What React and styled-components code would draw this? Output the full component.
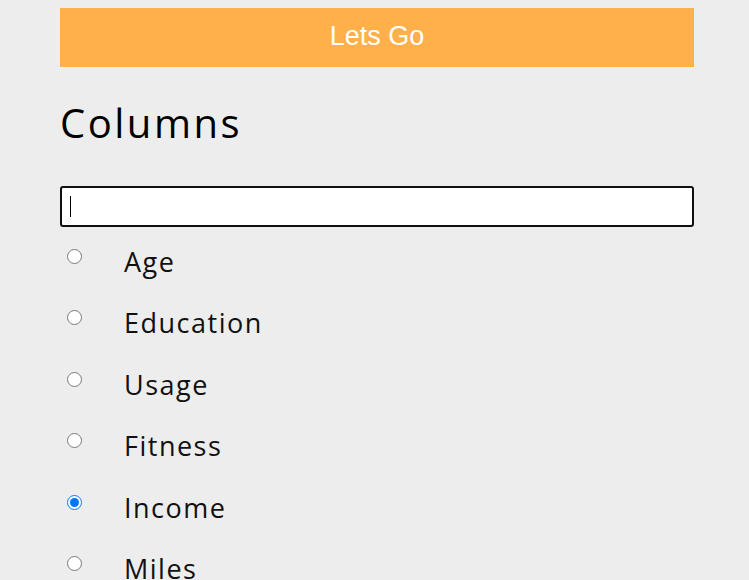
import React, { useState } from "react";
import styled, { createGlobalStyle } from "styled-components";

const Global = createGlobalStyle`
  body {
    margin: 0;
    background: #ededed;
    font-family: "Open Sans", "Liberation Sans", sans-serif;
    overflow: hidden;
  }
`;

const Page = styled.div`
  width: 634px;
  margin-left: 60px;
  padding-top: 8px;
`;

const GoButton = styled.button`
  display: block;
  width: 100%;
  height: 59px;
  padding: 0 0 2px;
  border: none;
  background: #ffb04a;
  color: #fff;
  font-family: "Liberation Sans", Arial, sans-serif;
  font-size: 27px;
  cursor: pointer;
`;

const Title = styled.h1`
  margin: 28px 0 0;
  font-size: 40px;
  font-weight: 400;
  letter-spacing: 2.5px;
  line-height: 56px;
  color: #000;
`;

const SearchBox = styled.div`
  position: relative;
  margin-top: 35px;

  &::after {
    content: "";
    position: absolute;
    left: 10px;
    top: 10px;
    width: 1px;
    height: 21px;
    background: #000;
    pointer-events: none;
  }
`;

const Search = styled.input`
  box-sizing: border-box;
  display: block;
  width: 100%;
  height: 41px;
  border: 2px solid #101010;
  border-radius: 3px;
  background: #fff;
  outline: none;
  padding: 0 8px;
  font-size: 18px;
  caret-color: transparent;
`;

const List = styled.div`
  display: flex;
  flex-direction: column;
  margin-top: 5px;
`;

const Row = styled.label`
  display: flex;
  align-items: flex-start;
  height: 61.4px;
`;

const Radio = styled.input`
  width: 15px;
  height: 15px;
  margin: 17px 0 0 7px;
  accent-color: #0075ff;
`;

const Name = styled.span`
  margin-left: 42px;
  margin-top: 12px;
  font-size: 27px;
  letter-spacing: 1.5px;
  line-height: 36px;
  color: #111;
`;

const columns = ["Age", "Education", "Usage", "Fitness", "Income", "Miles"];

export default function App() {
  const [picked, setPicked] = useState("Income");
  return (
    <Page>
      <Global />
      <GoButton>Lets Go</GoButton>
      <Title>Columns</Title>
      <SearchBox>
        <Search />
      </SearchBox>
      <List>
        {columns.map(c => (
          <Row key={c}>
            <Radio
              type="radio"
              name="col"
              checked={picked === c}
              onChange={() => setPicked(c)}
            />
            <Name>{c}</Name>
          </Row>
        ))}
      </List>
    </Page>
  );
}
